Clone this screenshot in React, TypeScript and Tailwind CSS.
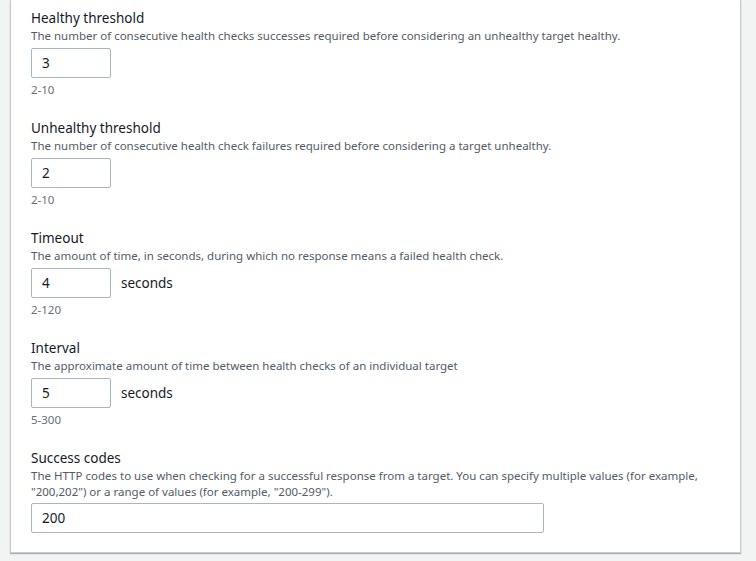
const FONT = "font-['Noto_Sans',_'Open_Sans',_sans-serif]";

interface Field {
  label: string;
  description: string;
  value: string;
  hint?: string;
  suffix?: string;
}

const FIELDS: Field[] = [
  {
    label: "Healthy threshold",
    description:
      "The number of consecutive health checks successes required before considering an unhealthy target healthy.",
    value: "3",
    hint: "2-10",
  },
  {
    label: "Unhealthy threshold",
    description:
      "The number of consecutive health check failures required before considering a target unhealthy.",
    value: "2",
    hint: "2-10",
  },
  {
    label: "Timeout",
    description:
      "The amount of time, in seconds, during which no response means a failed health check.",
    value: "4",
    hint: "2-120",
    suffix: "seconds",
  },
  {
    label: "Interval",
    description:
      "The approximate amount of time between health checks of an individual target",
    value: "5",
    hint: "5-300",
    suffix: "seconds",
  },
];

function NumberField({ field }: { field: Field }) {
  return (
    <div className="pb-5">
      <div className="text-[13.5px] leading-5 text-[#16191f]">{field.label}</div>
      <div className="text-[11.5px] leading-4 text-[#545b64]">{field.description}</div>
      <div className="mt-1 flex items-center gap-[10px]">
        <div className="flex h-[30px] w-[80px] items-center rounded-[2px] border border-[#aab7b8] bg-white px-[10px] text-[13.5px] text-[#16191f]">
          {field.value}
        </div>
        {field.suffix && (
          <span className="text-[13.5px] text-[#16191f]">{field.suffix}</span>
        )}
      </div>
      <div className="mt-1 text-[11.5px] leading-4 text-[#687078]">{field.hint}</div>
    </div>
  );
}

export default function App() {
  return (
    <div className={`h-[561px] w-[756px] overflow-hidden bg-[#f2f3f3] ${FONT}`}>
      <div className="ml-[10px] w-[731px] border-x border-b border-[#c6cbcb] bg-white px-[20px] pt-2 pb-[19px] shadow-[0_1px_1px_rgba(0,28,36,0.3)]">
        {FIELDS.map((f) => (
          <NumberField key={f.label} field={f} />
        ))}
        <div>
          <div className="text-[13.5px] leading-5 text-[#16191f]">Success codes</div>
          <div className="text-[11.5px] leading-4 text-[#545b64]">
            The HTTP codes to use when checking for a successful response from a target. You can
            specify multiple values (for example,
            <br />
            "200,202") or a range of values (for example, "200-299").
          </div>
          <div className="mt-[3px] flex h-[30px] w-[513px] items-center rounded-[2px] border border-[#aab7b8] bg-white px-[10px] text-[13.5px] text-[#16191f]">
            200
          </div>
        </div>
      </div>
    </div>
  );
}
